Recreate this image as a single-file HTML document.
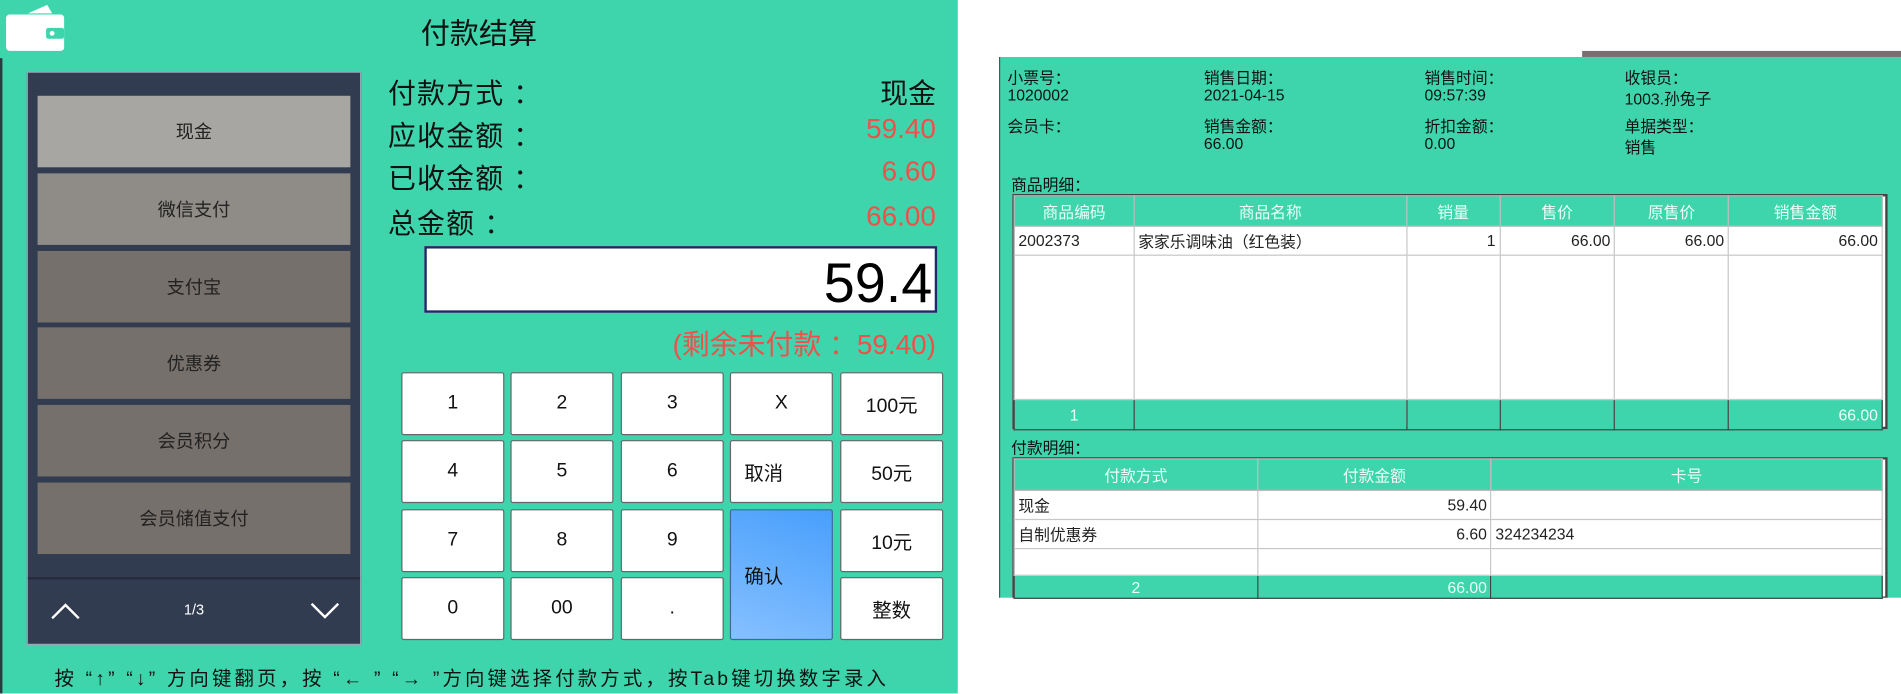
<!DOCTYPE html>
<html><head><meta charset="utf-8"><style>
*{margin:0;padding:0;box-sizing:border-box}
html,body{width:1901px;height:694px;overflow:hidden;background:#fff}
#s{position:absolute;left:0;top:0;width:1568px;height:572px;transform:scale(1.21237);transform-origin:0 0;font-family:"Liberation Sans","Noto Sans CJK SC",sans-serif}
.a{position:absolute}
.g{background:#3ed5ad}
.btn{position:absolute;left:8px;width:258px;height:59px;display:flex;align-items:center;justify-content:center;font-size:15px;color:#222}
.lbl{position:absolute;left:320px;font-size:23px;color:#111;letter-spacing:1px}
.val{position:absolute;right:796px;font-size:23px;color:#f0504a;text-align:right}
.k{position:absolute;width:85px;height:52px;background:#fff;border:1px solid #666;border-radius:2px;display:flex;align-items:center;justify-content:center;font-size:16px;color:#111}
.t{font-size:13px;color:#111;position:absolute}
table{position:absolute;border-collapse:collapse;font-size:13px;color:#222}
td{border:1px solid #c8c8c8;padding:0 3px;white-space:nowrap}
.h td{background:#3ed5ad;color:#eafff6;text-align:center;border-color:#bbb}
.f td{background:#3ed5ad;color:#eafff6;border-color:#444}
.r{text-align:right}
</style></head><body><div id="s">
<div class="a g" style="left:0;top:0;width:790px;height:572px"></div>
<div class="a" style="left:0;top:48px;width:2px;height:524px;background:#2a3a40"></div>
<svg class="a" style="left:3px;top:2px" width="50" height="42" viewBox="0 0 50 42"><path d="M20 9 L36 2 L40 9Z" fill="#fff"/><rect x="2" y="10" width="48" height="30" rx="3" fill="#fff"/><rect x="35" y="21" width="15" height="9" rx="2" fill="#3ed5ad"/><circle cx="40" cy="25.5" r="2" fill="#fff"/></svg>
<div class="a" style="left:0;width:790px;top:8px;text-align:center;font-size:24px;color:#111">付款结算</div>
<div class="a" style="left:22px;top:59px;width:276px;height:473px;background:#323c50;border:1px solid #9ab">
<div class="btn" style="top:19px;background:#a8a6a2">现金</div>
<div class="btn" style="top:83px;background:#8f8c88">微信支付</div>
<div class="btn" style="top:147px;background:#76706c">支付宝</div>
<div class="btn" style="top:210px;background:#76706c">优惠券</div>
<div class="btn" style="top:274px;background:#76706c">会员积分</div>
<div class="btn" style="top:338px;background:#76706c">会员储值支付</div>
<div class="a" style="left:0;top:416px;width:274px;height:2px;background:#252d3d"></div>
<svg class="a" style="left:18px;top:436px" width="26" height="16"><path d="M2 14 L13 3 L24 14" stroke="#fff" stroke-width="2" fill="none"/></svg>
<div class="a" style="left:0;width:274px;top:436px;text-align:center;font-size:12px;color:#fff">1/3</div>
<svg class="a" style="left:232px;top:436px" width="26" height="16"><path d="M2 2 L13 13 L24 2" stroke="#fff" stroke-width="2" fill="none"/></svg>
</div>
<div class="lbl" style="top:58px">付款方式 ：</div><div class="val" style="top:58px;color:#111">现金</div>
<div class="lbl" style="top:93px">应收金额 ：</div><div class="val" style="top:93px">59.40</div>
<div class="lbl" style="top:128px">已收金额 ：</div><div class="val" style="top:128px">6.60</div>
<div class="lbl" style="top:165px">总金额 ：</div><div class="val" style="top:165px">66.00</div>
<div class="a" style="left:350px;top:203px;width:423px;height:55px;background:#fff;border:2px solid #1a2a6a;text-align:right;font-size:46px;line-height:56px;padding-right:2px;color:#000">59.4</div>
<div class="val" style="top:265px">(剩余未付款 ：59.40)</div>
<div class="k" style="left:331px;top:307px">1</div><div class="k" style="left:421px;top:307px">2</div><div class="k" style="left:512px;top:307px">3</div><div class="k" style="left:602px;top:307px">X</div><div class="k" style="left:693px;top:307px">100元</div>
<div class="k" style="left:331px;top:363px">4</div><div class="k" style="left:421px;top:363px">5</div><div class="k" style="left:512px;top:363px">6</div><div class="k" style="left:602px;top:363px;justify-content:flex-start;padding-left:11px">取消</div><div class="k" style="left:693px;top:363px">50元</div>
<div class="k" style="left:331px;top:420px">7</div><div class="k" style="left:421px;top:420px">8</div><div class="k" style="left:512px;top:420px">9</div><div class="k" style="left:602px;top:420px;height:108px;background:linear-gradient(20deg,#86c0ff,#489ffc);justify-content:flex-start;padding-left:11px;border-color:#3a6aa0">确认</div><div class="k" style="left:693px;top:420px">10元</div>
<div class="k" style="left:331px;top:476px">0</div><div class="k" style="left:421px;top:476px">00</div><div class="k" style="left:512px;top:476px">.</div><div class="k" style="left:693px;top:476px">整数</div>
<div class="a" style="left:45px;top:546px;font-size:16px;color:#111;white-space:nowrap;letter-spacing:2.6px">按 “↑”  “↓” 方向键翻页，按 “← ” “→ ”方向键选择付款方式，按Tab键切换数字录入</div>

<div class="a" style="left:1305px;top:42px;width:263px;height:5px;background:#7a6e6e"></div>
<div class="a g" style="left:824px;top:47px;width:744px;height:446px;border-left:1px solid #555"></div>
<div class="t" style="left:831px;top:54px">小票号：</div><div class="t" style="left:831px;top:71px">1020002</div>
<div class="t" style="left:993px;top:54px">销售日期：</div><div class="t" style="left:993px;top:71px">2021-04-15</div>
<div class="t" style="left:1175px;top:54px">销售时间：</div><div class="t" style="left:1175px;top:71px">09:57:39</div>
<div class="t" style="left:1340px;top:54px">收银员：</div><div class="t" style="left:1340px;top:71px">1003.孙兔子</div>
<div class="t" style="left:831px;top:94px">会员卡：</div>
<div class="t" style="left:993px;top:94px">销售金额：</div><div class="t" style="left:993px;top:111px">66.00</div>
<div class="t" style="left:1175px;top:94px">折扣金额：</div><div class="t" style="left:1175px;top:111px">0.00</div>
<div class="t" style="left:1340px;top:94px">单据类型：</div><div class="t" style="left:1340px;top:111px">销售</div>
<div class="t" style="left:834px;top:142px">商品明细：</div>
<div class="a" style="left:835px;top:160px;width:722px;height:194px;background:#fff;border:2px solid #444"></div>
<table style="left:836px;top:161px;width:717px">
<colgroup><col style="width:99px"><col style="width:225px"><col style="width:77px"><col style="width:95px"><col style="width:94px"><col style="width:127px"></colgroup>
<tr class="h" style="height:25px"><td>商品编码</td><td>商品名称</td><td>销量</td><td>售价</td><td>原售价</td><td>销售金额</td></tr>
<tr style="height:24px"><td>2002373</td><td>家家乐调味油（红色装）</td><td class="r">1</td><td class="r">66.00</td><td class="r">66.00</td><td class="r">66.00</td></tr>
<tr style="height:119px"><td></td><td></td><td></td><td></td><td></td><td></td></tr>
<tr class="f" style="height:25px"><td style="text-align:center">1</td><td></td><td></td><td></td><td></td><td class="r">66.00</td></tr>
</table>
<div class="t" style="left:834px;top:359px">付款明细：</div>
<div class="a" style="left:835px;top:377px;width:722px;height:116px;background:#fff;border:2px solid #444;border-bottom:1px solid #444"></div>
<table style="left:836px;top:378px;width:717px">
<colgroup><col style="width:201px"><col style="width:193px"><col style="width:323px"></colgroup>
<tr class="h" style="height:26px"><td>付款方式</td><td>付款金额</td><td>卡号</td></tr>
<tr style="height:24px"><td>现金</td><td class="r">59.40</td><td></td></tr>
<tr style="height:24px"><td>自制优惠券</td><td class="r">6.60</td><td>324234234</td></tr>
<tr style="height:22px"><td></td><td></td><td></td></tr>
<tr class="f" style="height:19px"><td style="text-align:center">2</td><td class="r">66.00</td><td></td></tr>
</table>
</div></body></html>
